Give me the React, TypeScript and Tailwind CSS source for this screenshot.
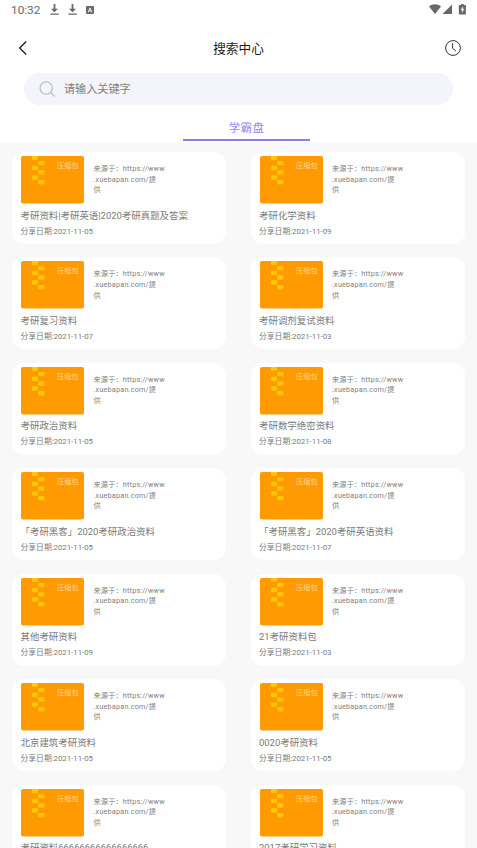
import React from 'react';

interface Resource {
  id: number;
  title: string;
  date: string;
}

const resources: Resource[] = [
  { id: 1, title: '考研资料|考研英语|2020考研真题及答案', date: '2021-11-05' },
  { id: 2, title: '考研化学资料', date: '2021-11-09' },
  { id: 3, title: '考研复习资料', date: '2021-11-07' },
  { id: 4, title: '考研调剂复试资料', date: '2021-11-03' },
  { id: 5, title: '考研政治资料', date: '2021-11-05' },
  { id: 6, title: '考研数学绝密资料', date: '2021-11-08' },
  { id: 7, title: '「考研黑客」2020考研政治资料', date: '2021-11-05' },
  { id: 8, title: '「考研黑客」2020考研英语资料', date: '2021-11-07' },
  { id: 9, title: '其他考研资料', date: '2021-11-09' },
  { id: 10, title: '21考研资料包', date: '2021-11-03' },
  { id: 11, title: '北京建筑考研资料', date: '2021-11-05' },
  { id: 12, title: '0020考研资料', date: '2021-11-05' },
  { id: 13, title: '考研资料66666666666666666', date: '2021-11-05' },
  { id: 14, title: '2017考研学习资料', date: '2021-11-05' },
];

function DownloadIcon() {
  return (
    <svg className="h-[11px] w-[9px]" viewBox="0 0 9 11" fill="#686868">
      <path d="M3.6 0h1.8v4.700H8L4.500 8.300 1 4.700h2.600zM.3 9.600h8.400v1.200H.3z" />
    </svg>
  );
}

function StatusBar() {
  return (
    <div className="flex h-5 items-center justify-between pl-[11px] pr-[11px]">
      <div className="flex items-center">
        <span className="w-[38.500px] text-[11.800px] leading-5 text-[#686868]">10:32</span>
        <div className="mt-[-1px] flex items-center gap-[9px]">
          <DownloadIcon />
          <DownloadIcon />
        </div>
        <svg className="ml-[9px] mt-[-1px] h-[8px] w-[8px]" viewBox="0 0 8 8">
          <rect width="8" height="8" rx="1" fill="#686868" />
          <path d="M2.2 6.2 4 1.9l1.8 4.3M2.9 4.9h2.2" fill="none" stroke="#fff" strokeWidth="0.9" />
        </svg>
      </div>
      <svg className="mt-[-2px] h-[11px] w-[37px]" viewBox="0 0 37 11" fill="#686868">
        <path d="M0 2.4C3.4-.4 8.6-.4 12 2.400L6 10z" />
        <path d="M23 .5V10h-9.500z" />
        <path d="M30.400 1h1.600V0h2.700v1h1.600q.6 0 .6.600v8.200q0 .6-.6.600h-5.900q-.6 0-.6-.6V1.600q0-.6.6-.6z" />
        <path d="M34.100 2.200 31.700 6h1.200v3l2.300-4h-1.100z" fill="#fff" />
      </svg>
    </div>
  );
}

function Header() {
  return (
    <div className="flex h-[53px] items-center justify-between pl-[18px] pr-[16px] pt-[2px]">
      <svg className="h-[14px] w-[14px]" viewBox="0 0 14 14" fill="none" stroke="#222" strokeWidth="1.400">
        <path d="M8.200.6 1.700 7l6.500 6.400" />
      </svg>
      <h1 className="mt-[2px] text-[12.700px] leading-5 text-[#1c1c1c]">搜索中心</h1>
      <svg className="h-4 w-4" viewBox="0 0 16 16" fill="none" stroke="#333" strokeWidth="1">
        <circle cx="8" cy="8" r="7.400" />
        <path d="M7.600 3.200v5.200l3.300 2.600" />
      </svg>
    </div>
  );
}

function SearchBox() {
  return (
    <div className="mx-6 flex h-8 items-center rounded-full bg-[#f4f5fa] pl-[15px]">
      <svg className="h-4 w-4" viewBox="0 0 16 16" fill="none" stroke="#b9b9bb" strokeWidth="1.100">
        <circle cx="7.200" cy="7" r="6.200" />
        <path d="m11.600 11.400 4 4.100" />
      </svg>
      <span className="ml-[9px] mt-[2px] text-[11.100px] leading-4 text-[#808080]">请输入关键字</span>
    </div>
  );
}

function ZipCover() {
  return (
    <svg className="h-[48px] w-[63px] shrink-0" viewBox="0 0 63 48">
      <defs>
        <linearGradient id="zip" x1="0" y1="0" x2="1" y2="1">
          <stop offset="0" stopColor="#ffd000" />
          <stop offset="1" stopColor="#ffbd00" />
        </linearGradient>
      </defs>
      <rect width="63" height="47.500" rx="2" fill="#ff9a03" />
      <g fill="url(#zip)">
        <path d="M11 0h6v3q0 1-1 1h-4q-1 0-1-1z" />
        <rect x="17.300" y="5" width="6.200" height="4.300" rx="1.300" />
        <rect x="11" y="9.700" width="6.200" height="4.500" rx="1.300" />
        <rect x="17.300" y="14.300" width="6.200" height="4.500" rx="1.300" />
        <rect x="11" y="19.200" width="6.200" height="4.500" rx="1.300" />
        <rect x="17.300" y="24" width="6.200" height="4.500" rx="1.300" />
      </g>
      <text x="36" y="11.600" fontSize="7.200" fill="#ffd08a">压缩包</text>
    </svg>
  );
}

function ResourceCard({ resource }: { resource: Resource }) {
  return (
    <div className="h-[92px] rounded-[12px] bg-white px-[8.500px] pt-1 even:pl-[8px]">
      <div className="ml-[0.5px] flex h-[48px]">
        <ZipCover />
        <p className="ml-[9.500px] mt-[8px] text-[7.200px] leading-[10.600px] tracking-[0.150px] text-[#808080]">
          来源于：<span className="tracking-[0.220px]">https://www</span>
          <br />
          <span className="tracking-[0.220px]">.xuebapan.com/</span>提
          <br />
          供
        </p>
      </div>
      <h2 className="mt-[4.500px] whitespace-nowrap text-[9.450px] leading-[14px] text-[#7a7a7a]">{resource.title}</h2>
      <p className="mt-[4px] whitespace-nowrap text-[7.800px] leading-[10px] text-[#7a7a7a]">分享日期:{resource.date}</p>
    </div>
  );
}

export default function App() {
  return (
    <div className="flex h-[848px] w-[477px] flex-col overflow-hidden bg-white font-['Roboto','Noto_Sans_CJK_SC',sans-serif]">
      <StatusBar />
      <Header />
      <SearchBox />

      {/* Source tabs */}
      <div className="flex h-[38px] shrink-0 justify-center pl-4 pb-[2px]">
        <div className="w-[127px] border-b-2 border-[#8f79f2] pt-[13px] text-center text-[11.500px] leading-5 tracking-[0.400px] text-[#9a86f5]">
          学霸盘
        </div>
      </div>

      {/* Results */}
      <div className="grid min-h-0 flex-1 auto-rows-[92px] grid-cols-2 gap-x-[25px] gap-y-[13.430px] overflow-hidden bg-[#f8f8f8] px-3 pt-[9px]">
        {resources.map((resource) => (
          <ResourceCard key={resource.id} resource={resource} />
        ))}
      </div>
    </div>
  );
}
